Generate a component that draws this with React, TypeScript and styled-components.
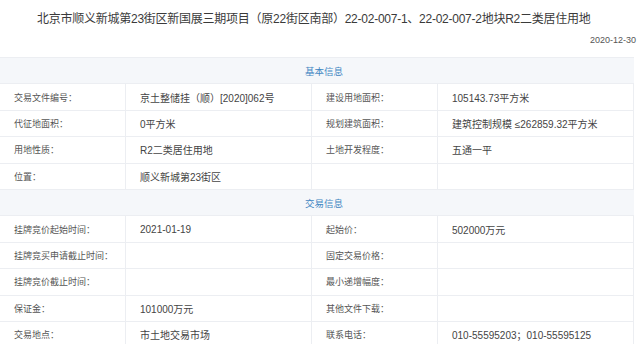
import React from 'react'
import styled, { createGlobalStyle } from 'styled-components'

const Global = createGlobalStyle`
    body {
        margin: 0;
        background: #fff;
        font-family: "Liberation Sans", "Noto Sans CJK SC", sans-serif;
    }
`
const Page = styled.div`
    width: 640px;
    height: 344px;
    overflow: hidden;
`
const Title = styled.h1`
    margin: 0;
    padding: 10px 0 0 37px;
    font-size: 12px;
    letter-spacing: -0.25px;
    line-height: 18px;
    font-weight: normal;
    color: #3a3a3a;
    white-space: nowrap;
`
const DateLine = styled.div`
    margin-top: 6px;
    padding-right: 4px;
    text-align: right;
    font-size: 9px;
    line-height: 12px;
    color: #555;
`
const Table = styled.div`
    margin-top: 11px;
    width: 634px;
    display: grid;
    grid-template-columns: 126px 186px 126px 196px;
    grid-auto-rows: 26.4px;
    border-top: 1px solid #eceef2;
    border-right: 1px solid #eceef2;
    box-sizing: border-box;
`
const Section = styled.div`
    grid-column: 1 / -1;
    display: flex;
    align-items: center;
    justify-content: center;
    padding-left: 14px;
    background: #f5f7fa;
    border-bottom: 1px solid #eceef2;
    color: #3f86c2;
    font-size: 9.5px;
`
const Cell = styled.div<{ $label?: boolean; $last?: boolean }>`
    display: flex;
    align-items: center;
    padding-left: 14px;
    border-bottom: 1px solid #eceef2;
    border-right: ${p => (p.$last ? 'none' : '1px solid #eceef2')};
    font-size: ${p => (p.$label ? '9px' : '10px')};
    color: ${p => (p.$label ? '#555' : '#444')};
    white-space: nowrap;
    box-sizing: border-box;
`

type Row = [string, string, string, string]

const basic: Row[] = [
    ['交易文件编号：', '京土整储挂（顺）[2020]062号', '建设用地面积：', '105143.73平方米'],
    ['代征地面积：', '0平方米', '规划建筑面积：', '建筑控制规模 ≤262859.32平方米'],
    ['用地性质：', 'R2二类居住用地', '土地开发程度：', '五通一平'],
    ['位置：', '顺义新城第23街区', '', ''],
]
const trade: Row[] = [
    ['挂牌竞价起始时间：', '2021-01-19', '起始价：', '502000万元'],
    ['挂牌竞买申请截止时间：', '', '固定交易价格：', ''],
    ['挂牌竞价截止时间：', '', '最小递增幅度：', ''],
    ['保证金：', '101000万元', '其他文件下载：', ''],
    ['交易地点：', '市土地交易市场', '联系电话：', '010-55595203；010-55595125'],
]

function Rows({ rows }: { rows: Row[] }) {
    return (
        <>
            {rows.map((r, i) => (
                <React.Fragment key={i}>
                    <Cell $label>{r[0]}</Cell>
                    <Cell>{r[1]}</Cell>
                    <Cell $label>{r[2]}</Cell>
                    <Cell $last>{r[3]}</Cell>
                </React.Fragment>
            ))}
        </>
    )
}

export default function App() {
    return (
        <>
            <Global />
            <Page>
                <Title>北京市顺义新城第23街区新国展三期项目（原22街区南部）22-02-007-1、22-02-007-2地块R2二类居住用地</Title>
                <DateLine>2020-12-30</DateLine>
                <Table>
                    <Section>基本信息</Section>
                    <Rows rows={basic} />
                    <Section>交易信息</Section>
                    <Rows rows={trade} />
                </Table>
            </Page>
        </>
    )
}
